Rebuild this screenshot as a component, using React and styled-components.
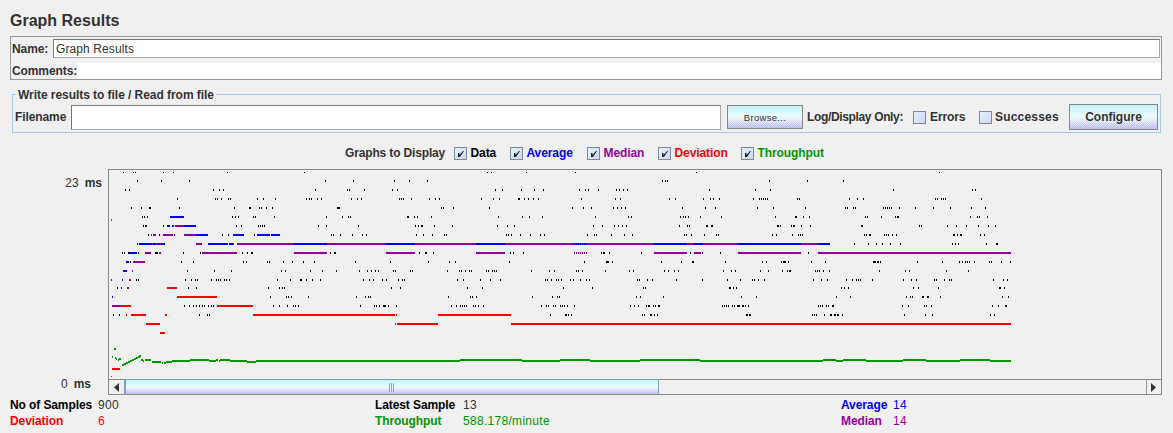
import React from "react";
import styled, { createGlobalStyle } from "styled-components";

const GlobalStyle = createGlobalStyle`
  html, body {
    margin: 0;
    padding: 0;
    background: #f0f0f0;
  }
`;

const BLUE = "#0000ff";
const PURPLE = "#990099";
const RED = "#ff0000";
const GREEN = "#009900";

// black sample dots, read per crop: page x = x0 + v / 3
const DOT_CROPS = [
  {
    x0: 0,
    rows: {
      172: [370, 400, 406, 490, 520, 682, 913],
      181: [412, 484, 568, 976],
      190: [376, 388, 640, 658, 670, 946],
      199: [532, 646, 652, 664, 685, 691, 772, 790, 826, 919, 928, 934, 952, 964],
      208: [394, 424, 448, 451, 538, 703, 748, 751, 778, 784, 799, 817],
      217: [427, 433, 442, 697, 706, 715, 760, 766, 823, 979],
      226: [430, 436, 439, 490, 709, 724, 775, 781, 787, 793, 955, 979],
      235: [445, 478, 667, 763],
      253: [367, 373, 385, 465, 468, 471, 550, 601, 727, 742, 754, 757],
      262: [391, 544, 580, 730, 739, 802, 808, 850, 877, 910, 943],
      271: [562, 643, 694, 844, 856, 931, 967],
      280: [409, 415, 556, 574, 586, 592, 634, 649, 655, 661, 673, 679, 688, 832, 871, 901, 904, 919, 937, 961],
      288: [352, 565, 589, 805, 838, 847, 853],
      297: [811, 859, 865, 874, 925],
      306: [553, 568, 580, 589, 598, 607, 613, 625, 634, 640, 820, 838, 862, 880, 886, 895],
      315: [340, 358, 598, 622, 628],
    },
  },
  {
    x0: 330,
    rows: {
      172: [472, 484, 589, 736],
      181: [70, 193, 238, 292],
      190: [52, 57, 103, 187, 202, 496, 517, 574, 613, 640, 748, 766, 775, 805, 859, 868, 880, 892],
      199: [64, 82, 94, 208, 214, 220, 244, 298, 316, 328, 454, 490, 508, 565, 568, 583, 595, 610, 625, 754, 856, 871],
      208: [22, 25, 28, 334, 340, 370, 478, 727, 760, 784, 850, 862, 874, 886],
      217: [37, 55, 61, 232, 235, 253, 262, 304, 505, 577, 598, 637, 796, 895, 904],
      226: [85, 256, 265, 274, 277, 313, 367, 502, 532, 553, 790, 817, 853, 865, 877, 889],
      235: [4, 10, 31, 67, 97, 109, 259, 280, 307, 343, 349, 529, 535, 544, 571, 601, 631, 643, 772, 793, 799, 844, 883, 907],
      253: [1, 13, 16, 268, 286, 289, 310, 541, 550, 580, 814, 820, 823, 838, 934],
      262: [76, 181, 295, 358, 376, 538, 763, 829, 832, 835, 847],
      271: [19, 88, 112, 124, 136, 145, 190, 196, 241, 247, 352, 388, 394, 406, 418, 424, 469, 475, 487, 493, 499, 604, 658, 673, 739, 745, 757, 826, 898, 910],
      280: [100, 118, 130, 157, 169, 205, 217, 223, 382, 400, 451, 481, 511, 646, 652, 664, 679, 685, 694, 721, 730, 751, 769, 778, 922, 928, 952, 967],
      288: [184, 211, 412, 457, 700, 787, 940, 946],
      297: [79, 106, 115, 121, 355, 421, 427, 439, 607, 667, 682, 688, 919, 931],
      306: [91, 133, 139, 148, 160, 163, 166, 175, 199, 364, 379, 391, 397, 403, 409, 430, 436, 445, 460, 634, 649, 655, 670, 676, 691, 697, 703, 712, 733, 901, 913, 925, 949, 955, 958, 970, 976, 985, 988],
      315: [661, 706, 709, 715, 724, 937, 943, 961, 964, 973, 982],
    },
  },
  {
    x0: 660,
    rows: {
      172: [109],
      181: [7, 16, 22, 328, 442],
      190: [148, 286, 331],
      199: [28, 46, 130, 151, 160, 178, 280, 298, 304, 310, 316, 322, 412, 418],
      208: [67, 136, 166, 292, 340, 436],
      217: [61, 70, 76, 85, 121, 184, 346, 406, 409, 430, 448],
      226: [58, 82, 88, 139, 142, 154, 157, 352, 355, 361, 394, 400, 403, 424, 451],
      235: [73, 79, 94, 133, 169, 175, 337, 349, 397, 415, 421, 427],
      253: [91, 181, 445],
      262: [4, 64, 97, 100, 196, 307, 319, 364, 370, 373, 376, 385, 454, 496],
      271: [13, 25, 43, 55, 190, 214, 226, 301, 325, 367, 382, 388, 391, 466, 472, 478, 490, 508],
      280: [49, 127, 202, 241, 277, 283, 295, 313, 460, 484, 502],
      288: [208, 211, 220, 229],
      297: [10, 244, 289, 529],
      306: [187, 193, 199, 205, 217, 223, 232, 235, 238, 247, 250, 256, 265, 475, 481, 487, 499, 505, 517, 520],
      315: [259, 262, 268, 271, 457, 463, 469, 493, 511, 514, 523, 526, 532, 535],
    },
  },
  {
    x0: 840,
    rows: {
      172: [298],
      181: [10],
      190: [160, 397, 406],
      199: [28, 52, 70, 286, 292, 304, 310, 316, 424],
      208: [16, 22, 40, 46, 130, 136, 142, 148, 154, 178, 226, 280, 331, 394, 436],
      217: [76, 82, 124, 166, 172, 175, 391, 412, 418, 442],
      226: [64, 67, 238, 244, 322, 349, 379, 415, 445, 466],
      235: [73, 79, 88, 91, 133, 139, 145, 157, 169, 340, 343, 352, 361, 364, 421, 433],
      244: [43, 85, 109, 127, 151, 181, 337, 346, 355, 439, 469, 472],
      262: [100, 103, 106, 112, 115, 121, 232, 307, 358, 367, 376, 382, 388, 403, 448, 454, 484, 511],
      271: [118, 196, 208, 319, 385],
      280: [19, 37, 49, 55, 61, 97, 190, 214, 229, 283, 289, 313, 328, 334, 460, 490, 502],
      288: [4, 13, 25, 220, 235, 295, 478, 481, 493],
      297: [31, 199, 211, 217, 247, 250, 262, 265, 301, 487, 505],
      306: [187, 205, 253, 259, 274, 457, 475, 496, 499],
      315: [7, 193, 256, 277, 451, 463],
    },
  },
];

// coloured runs: [row, from, to, colour]
const RUNS = [
  [217, 170, 184, BLUE],
  [226, 167, 170, BLUE], [226, 172, 174, BLUE], [226, 175, 184, PURPLE], [226, 184, 196, BLUE],
  [235, 151, 152, PURPLE], [235, 153, 156, PURPLE], [235, 163, 173, PURPLE], [235, 174, 175, PURPLE],
  [235, 184, 196, PURPLE], [235, 196, 208, BLUE], [235, 228, 229, BLUE], [235, 233, 244, BLUE],
  [235, 257, 270, BLUE], [235, 271, 280, BLUE],
  [244, 137, 138, BLUE], [244, 139, 152, BLUE], [244, 152, 153, PURPLE], [244, 153, 156, BLUE],
  [244, 156, 157, PURPLE], [244, 157, 160, BLUE], [244, 160, 161, PURPLE], [244, 161, 165, BLUE],
  [244, 196, 202, PURPLE], [244, 208, 228, BLUE], [244, 229, 234, BLUE], [244, 237, 294, PURPLE],
  [244, 294, 327, BLUE], [244, 327, 386, PURPLE], [244, 386, 415, BLUE], [244, 415, 476, PURPLE],
  [244, 476, 505, BLUE], [244, 505, 587, PURPLE], [244, 587, 654, PURPLE], [244, 654, 687, BLUE],
  [244, 687, 694, PURPLE], [244, 694, 701, BLUE], [244, 701, 703, BLUE], [244, 703, 738, PURPLE],
  [244, 738, 801, BLUE], [244, 801, 818, PURPLE], [244, 818, 830, BLUE],
  [253, 129, 137, BLUE], [253, 138, 139, BLUE], [253, 145, 151, PURPLE], [253, 159, 161, PURPLE],
  [253, 202, 237, PURPLE], [253, 294, 327, PURPLE], [253, 386, 415, PURPLE], [253, 476, 505, PURPLE],
  [253, 654, 687, PURPLE], [253, 694, 701, PURPLE], [253, 702, 703, PURPLE], [253, 738, 801, PURPLE],
  [253, 818, 1011, PURPLE],
  [262, 126, 129, BLUE], [262, 133, 145, PURPLE],
  [271, 123, 127, BLUE], [271, 132, 133, PURPLE],
  [280, 111, 112, PURPLE], [280, 122, 123, BLUE], [280, 129, 131, PURPLE],
  [288, 121, 122, BLUE], [288, 127, 129, PURPLE], [288, 167, 177, RED],
  [297, 112, 113, BLUE], [297, 177, 217, RED],
  [306, 112, 121, PURPLE], [306, 121, 131, RED], [306, 217, 253, RED],
  [315, 126, 127, RED], [315, 131, 146, RED], [315, 165, 167, RED], [315, 253, 395, RED],
  [315, 396, 397, RED], [315, 438, 511, RED],
  [324, 146, 160, RED], [324, 395, 396, RED], [324, 397, 438, RED], [324, 511, 1011, RED],
  [333, 160, 165, RED],
  [369, 112, 120, RED],
];

// throughput trace: [from, to, y]
const TRACE = [
  [114, 116, 348], [112, 113, 356], [115, 116, 357], [116, 117, 358], [118, 119, 359], [119, 121, 358],
  [122, 124, 364], [124, 126, 363], [126, 128, 362], [128, 130, 361], [130, 132, 360], [132, 134, 359],
  [134, 136, 358], [136, 138, 357], [138, 140, 356], [139, 141, 355],
  [141, 143, 359], [143, 144, 360], [145, 151, 359], [152, 161, 361], [162, 163, 362], [164, 166, 362],
  [166, 172, 361], [172, 190, 360], [190, 209, 359], [209, 216, 360], [216, 218, 359], [219, 220, 360],
  [220, 230, 359], [230, 247, 360], [247, 249, 361], [249, 256, 361], [256, 340, 360],
  [340, 460, 360], [460, 522, 359], [522, 560, 360], [560, 590, 359], [590, 640, 360],
  [640, 700, 359], [700, 780, 360], [780, 823, 360], [823, 836, 359], [836, 843, 360],
  [843, 850, 359], [850, 866, 359], [866, 903, 360], [903, 926, 359], [926, 960, 360],
  [960, 990, 359], [990, 1011, 360],
];

const plotRects = () => {
  const out = [];
  DOT_CROPS.forEach(({ x0, rows }) => {
    Object.entries(rows).forEach(([row, xs]) => {
      const r = Number(row);
      xs.forEach((v) => {
        // the top row only shows one pixel high
        out.push({
          x: Math.floor(x0 + v / 3),
          y: r === 172 ? 172 : r - 1,
          w: 1,
          h: r === 172 ? 1 : 2,
          fill: "#000",
        });
      });
    });
  });
  RUNS.forEach(([row, from, to, fill]) => {
    out.push({ x: from, y: row - 1, w: to - from, h: 2, fill });
  });
  // the dashed stretch where samples come quickly
  for (let x = 574; x < 587; x += 2) {
    out.push({ x, y: 243, w: 1, h: 2, fill: BLUE });
    out.push({ x, y: 252, w: 1, h: 2, fill: PURPLE });
  }
  TRACE.forEach(([from, to, y]) => {
    out.push({ x: from, y, w: to - from, h: 2, fill: GREEN });
  });
  out.push({ x: 111, y: 219, w: 1, h: 2, fill: GREEN });
  out.push({ x: 111, y: 376, w: 1, h: 1, fill: RED });
  return out;
};

const Page = styled.div`
  width: 1173px;
  height: 433px;
  box-sizing: border-box;
  padding: 12px 11px 0 10px;
  overflow: hidden;
  background: #f0f0f0;
  color: #333;
  font-family: "Liberation Sans", Arial, sans-serif;
  font-size: 12px;
`;

const Title = styled.h1`
  margin: 0 0 6px;
  font-size: 16px;
  line-height: 18px;
  font-weight: bold;
  color: #333;
`;

const NamePanel = styled.div`
  height: 44px;
  box-sizing: border-box;
  border: 1px solid #999;
  display: flex;
  flex-direction: column;
`;

const NameRow = styled.div`
  display: flex;
  align-items: center;
  height: 19px;
  margin-top: 2px;
  padding: 0 1px;
`;

const FieldLabel = styled.span`
  font-weight: bold;
  font-size: 12px;
  letter-spacing: -0.1px;
  color: #333;
  width: ${(p) => p.$width}px;
  flex: none;
`;

const TextBox = styled.div`
  flex: ${(p) => (p.$width ? "none" : "1")};
  width: ${(p) => (p.$width ? `${p.$width}px` : "auto")};
  height: ${(p) => p.$height}px;
  box-sizing: border-box;
  background: #fff;
  border: 1px solid #aaa;
  border-top-color: #777;
  border-left-color: #777;
  padding-left: 2px;
  line-height: 18px;
  font-size: 12px;
  letter-spacing: 0.1px;
  color: #333;
`;

const CommentsRow = styled.div`
  display: flex;
  align-items: center;
  height: 17px;
  margin-top: 4px;
  padding-left: 1px;
`;

const CommentsArea = styled.div`
  flex: 1;
  height: 16px;
  background: #fff;
`;

const FileSet = styled.fieldset`
  margin: 6px 1px 0 2px;
  padding: 2px 0 0 2px;
  height: 47px;
  box-sizing: border-box;
  min-width: 0;
  border: 1px solid #a3cbf0;
`;

const FileLegend = styled.legend`
  margin-left: 1px;
  padding: 2px 2px 0;
  font-weight: bold;
  font-size: 12px;
  line-height: 14px;
  letter-spacing: -0.05px;
  color: #333;
`;

const FileRow = styled.div`
  display: flex;
  align-items: center;
  height: 26px;
`;

const ditherButton = `
  background:
    repeating-conic-gradient(rgba(255, 255, 255, 0.4) 0 25%, transparent 0 50%) 0 0 / 2px 2px,
    linear-gradient(#b4f0f4 0%, #e2fbfd 42%, #e4ecfb 60%, #b0b0ee 100%);
`;

const Button = styled.div`
  flex: none;
  box-sizing: border-box;
  width: ${(p) => p.$width}px;
  height: ${(p) => p.$height}px;
  margin-left: ${(p) => p.$left}px;
  border: 1px solid #888;
  ${ditherButton}
  display: flex;
  align-items: center;
  justify-content: center;
  color: #333;
  font-size: ${(p) => (p.$small ? 9.5 : 12)}px;
  font-weight: ${(p) => (p.$small ? "normal" : "bold")};
  letter-spacing: ${(p) => (p.$small ? 0.3 : 0)}px;
`;

const OnlyLabel = styled.span`
  margin-left: 4px;
  width: 106px;
  flex: none;
  font-weight: bold;
  letter-spacing: -0.35px;
`;

const BoxLabel = styled.span`
  display: flex;
  align-items: center;
  gap: ${(p) => p.$gap || 4}px;
  flex: none;
  width: ${(p) => (p.$width ? `${p.$width}px` : "auto")};
  font-weight: bold;
  letter-spacing: ${(p) => (p.$spacing !== undefined ? p.$spacing : -0.1)}px;
  color: ${(p) => p.$color || "#333"};
`;

const CheckBox = styled.span`
  width: 13px;
  height: 13px;
  flex: none;
  box-sizing: border-box;
  border: 1px solid #7f8a9a;
  background: linear-gradient(135deg, #e0f4f8, #d4d4f6);
  display: flex;
`;

const GraphsRow = styled.div`
  display: flex;
  align-items: center;
  height: 16px;
  margin-top: 12px;
  padding-left: 335px;
`;

const GraphsLabel = styled.span`
  font-weight: bold;
  font-size: 12px;
  letter-spacing: -0.15px;
  width: 109px;
  flex: none;
`;

const ChartRow = styled.div`
  display: grid;
  grid-template-columns: 98px 1054px;
  height: 226px;
  margin-top: 8px;
`;

const Axis = styled.div`
  display: flex;
  flex-direction: column;
  justify-content: space-between;
  padding: 7px 0 4px;
`;

const AxisLabel = styled.div`
  display: flex;
  justify-content: flex-end;
  gap: ${(p) => p.$gap}px;
  padding-right: ${(p) => p.$right}px;
  line-height: 14px;
  font-size: 12px;
`;

const ChartBox = styled.div`
  box-sizing: border-box;
  border: 1px solid #888;
  display: flex;
  flex-direction: column;
`;

const Plot = styled.svg`
  display: block;
  flex: none;
  shape-rendering: crispEdges;
`;

const ScrollBar = styled.div`
  display: flex;
  height: 15px;
  box-sizing: border-box;
  border-top: 1px solid #888;
  background: #f0f0f0;
`;

const ArrowButton = styled.div`
  width: 15px;
  flex: none;
  display: flex;
  align-items: center;
  justify-content: center;
  background: #f0f0f0;
  box-sizing: border-box;
  border-left: ${(p) => (p.$right ? "1px solid #999" : "0")};
`;

const Thumb = styled.div`
  width: 535px;
  flex: none;
  box-sizing: border-box;
  margin-top: -1px;
  border: 1px solid #7f9fcb;
  border-bottom-width: 0;
  border-left-width: 2px;
  ${ditherButton}
  display: flex;
  align-items: center;
  justify-content: center;
  gap: 1px;
  padding-right: 1px;
`;

const Grip = styled.i`
  display: block;
  width: 1px;
  height: 9px;
  background: #8fa6c4;
`;

const Track = styled.div`
  flex: 1;
`;

const Stats = styled.div`
  display: grid;
  grid-template-columns: 88px 277px 88px 378px 52px 1fr;
  grid-auto-rows: 16px;
  margin-top: 2px;
  line-height: 16px;
`;

const StatName = styled.span`
  font-weight: bold;
  color: ${(p) => p.$color};
  letter-spacing: -0.1px;
`;

const StatValue = styled.span`
  color: ${(p) => p.$color};
  letter-spacing: 0.3px;
`;

const Check = () => (
  <svg width="11" height="11" viewBox="0 0 11 11" aria-hidden="true">
    <path d="M3 5 L3 9 L5 9 L9 3 L8 3 L4.6 7 L4.4 5 Z" fill="#222" />
  </svg>
);

const LeftArrow = () => (
  <svg width="6" height="9" viewBox="0 0 6 9" aria-hidden="true">
    <path d="M5 0 L0 4.5 L5 9 Z" fill="#333" />
  </svg>
);

const RightArrow = () => (
  <svg width="6" height="9" viewBox="0 0 6 9" aria-hidden="true">
    <path d="M0 0 L5 4.5 L0 9 Z" fill="#333" />
  </svg>
);

const graphs = [
  ["Data", "#000", 56],
  ["Average", BLUE, 77],
  ["Median", PURPLE, 71],
  ["Deviation", RED, 83],
  ["Throughput", GREEN, 82],
];

const stats = [
  ["No of Samples", "900", "#000", "#333"],
  ["Latest Sample", "13", "#000", "#333"],
  ["Average", "14", BLUE, BLUE],
  ["Deviation", "6", RED, RED],
  ["Throughput", "588.178/minute", GREEN, GREEN],
  ["Median", "14", PURPLE, PURPLE],
];

const App = () => {
  const rects = plotRects();
  return (
    <Page>
      <GlobalStyle />
      <Title>Graph Results</Title>
      <NamePanel>
        <NameRow>
          <FieldLabel $width={41}>Name:</FieldLabel>
          <TextBox $height={19}>Graph Results</TextBox>
        </NameRow>
        <CommentsRow>
          <FieldLabel $width={65}>Comments:</FieldLabel>
          <CommentsArea />
        </CommentsRow>
      </NamePanel>
      <FileSet>
        <FileLegend>Write results to file / Read from file</FileLegend>
        <FileRow>
          <FieldLabel $width={56}>Filename</FieldLabel>
          <TextBox $width={650} $height={25} />
          <Button $small $width={76} $height={24} $left={6}>
            Browse...
          </Button>
          <OnlyLabel>Log/Display Only:</OnlyLabel>
          <BoxLabel $width={66}>
            <CheckBox />
            Errors
          </BoxLabel>
          <BoxLabel $width={90} $gap={3} $spacing={0.2}>
            <CheckBox />
            Successes
          </BoxLabel>
          <Button $width={89} $height={26} $left={0}>
            Configure
          </Button>
        </FileRow>
      </FileSet>
      <GraphsRow>
        <GraphsLabel>Graphs to Display</GraphsLabel>
        {graphs.map(([name, color, width]) => (
          <BoxLabel key={name} $color={color} $width={width} $gap={3.5}>
            <CheckBox>
              <Check />
            </CheckBox>
            {name}
          </BoxLabel>
        ))}
      </GraphsRow>
      <ChartRow>
        <Axis>
          <AxisLabel $gap={6} $right={6}>
            <span>23</span>
            <b>ms</b>
          </AxisLabel>
          <AxisLabel $gap={6} $right={17}>
            <span>0</span>
            <b>ms</b>
          </AxisLabel>
        </Axis>
        <ChartBox>
          <Plot width="1052" height="209" viewBox="109 170 1052 209">
            {rects.map((r, i) => (
              <rect key={i} x={r.x} y={r.y} width={r.w} height={r.h} fill={r.fill} />
            ))}
          </Plot>
          <ScrollBar>
            <ArrowButton>
              <LeftArrow />
            </ArrowButton>
            <Thumb>
              <Grip />
              <Grip />
              <Grip />
            </Thumb>
            <Track />
            <ArrowButton $right>
              <RightArrow />
            </ArrowButton>
          </ScrollBar>
        </ChartBox>
      </ChartRow>
      <Stats>
        {stats.map(([name, value, nameColor, valueColor]) => (
          <React.Fragment key={name}>
            <StatName $color={nameColor}>{name}</StatName>
            <StatValue $color={valueColor}>{value}</StatValue>
          </React.Fragment>
        ))}
      </Stats>
    </Page>
  );
};

export default App;
